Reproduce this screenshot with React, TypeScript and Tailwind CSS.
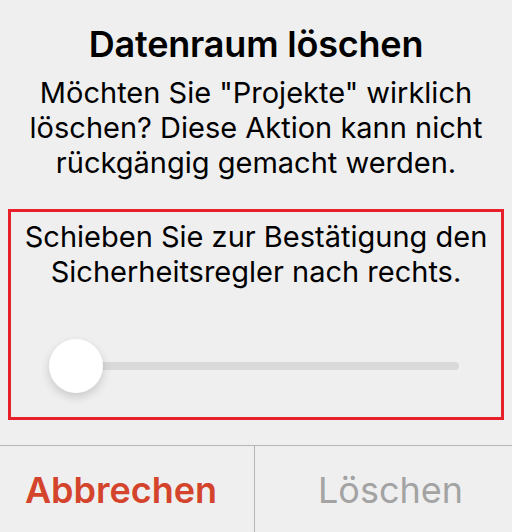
import React from 'react';

export default function App() {
  const value = 0;

  return (
    <div className="w-[512px] h-[532px] bg-[#efefef] flex flex-col overflow-hidden font-['Inter',sans-serif] text-black">
      <div className="pt-[24px] px-2 text-center">
        <h1 className="text-[36px] font-semibold leading-[40px] tracking-[-0.2px]">Datenraum löschen</h1>
        <p className="mt-[11px] text-[29px] leading-[35px]">
          Möchten Sie "Projekte" wirklich
          <br />
          löschen? Diese Aktion kann nicht
          <br />
          rückgängig gemacht werden.
        </p>
      </div>

      <div className="mx-2 mt-[29px] h-[211px] border-[3px] border-[#e8202b] flex flex-col">
        <p className="pt-[7px] text-center text-[29px] leading-[35px]">
          Schieben Sie zur Bestätigung den
          <br />
          Sicherheitsregler nach rechts.
        </p>
        <div className="mt-[50px] ml-[38px] mr-[15px] h-[54px] relative flex items-center">
          <div className="mx-[27px] h-[8px] flex-1 rounded-full bg-[#d9d9d9]" />
          <div
            className="absolute top-0 w-[54px] h-[54px] rounded-full bg-white shadow-[0_4px_10px_rgba(0,0,0,0.16)]"
            style={{ left: `${value}%` }}
          />
        </div>
      </div>

      <div className="mt-auto h-[87px] border-t border-[#b5b5b5] flex">
        <button className="w-[255px] border-r border-[#b5b5b5] text-[36px] font-semibold text-[#d4442c] pt-[2px] pr-[12px]">
          Abbrechen
        </button>
        <button className="flex-1 text-[36px] text-[#a3a3a3] pt-[2px] pl-[14px]">Löschen</button>
      </div>
    </div>
  );
}
